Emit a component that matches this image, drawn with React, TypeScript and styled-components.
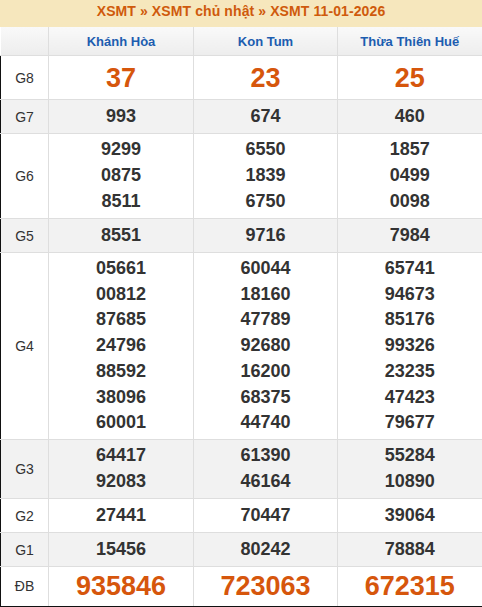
import React from 'react'
import styled, { createGlobalStyle } from 'styled-components'

const GlobalStyle = createGlobalStyle`
  html, body {
    margin: 0;
    padding: 0;
    background: #fff;
  }
  body {
    font-family: 'Liberation Sans', Arial, sans-serif;
  }
`;

const Board = styled.div`
  width: 482px;
  box-sizing: border-box;
`;

const Title = styled.div`
  height: 27px;
  background: #f6e7bd;
  color: #cf5a0c;
  font-weight: bold;
  font-size: 14px;
  line-height: 22px;
  text-align: center;
  letter-spacing: 0.1px;
`;

const Table = styled.table`
  width: 482px;
  border-collapse: collapse;
  table-layout: fixed;
`;

const HeadCell = styled.th`
  height: 28px;
  padding: 0;
  background: linear-gradient(#f9f9f9, #ededed);
  border: 1px solid #dedede;
  border-top: none;
  color: #1c5db0;
  font-size: 13px;
  font-weight: bold;
  text-align: center;
  &:first-child {
    border-left: none;
  }
  &:last-child {
    border-right: 2px solid #111;
  }
`;

const Row = styled.tr<{ $h: number; $shaded?: boolean }>`
  height: ${p => p.$h}px;
  background: ${p => (p.$shaded ? '#f2f2f2' : '#fff')};
  &:last-child td {
    border-bottom: 2px solid #111;
  }
`;

const Label = styled.td`
  padding: 0;
  border: 1px solid #dedede;
  border-left: 1px solid #111;
  color: #333;
  font-size: 14px;
  text-align: center;
`;

const Cell = styled.td`
  padding: 0;
  border: 1px solid #dedede;
  text-align: center;
  vertical-align: middle;
  &:last-child {
    border-right: 2px solid #111;
  }
`;

const Num = styled.div<{ $big?: boolean }>`
  color: ${p => (p.$big ? '#d6560c' : '#333')};
  font-weight: bold;
  font-size: ${p => (p.$big ? 27 : 18)}px;
  line-height: ${p => (p.$big ? 32 : 25.7)}px;
`;

type Prize = { label: string; h: number; big?: boolean; cols: string[][] };

const prizes: Prize[] = [
  { label: 'G8', h: 44, big: true, cols: [['37'], ['23'], ['25']] },
  { label: 'G7', h: 34, cols: [['993'], ['674'], ['460']] },
  {
    label: 'G6',
    h: 85,
    cols: [
      ['9299', '0875', '8511'],
      ['6550', '1839', '6750'],
      ['1857', '0499', '0098'],
    ],
  },
  { label: 'G5', h: 34, cols: [['8551'], ['9716'], ['7984']] },
  {
    label: 'G4',
    h: 187,
    cols: [
      ['05661', '00812', '87685', '24796', '88592', '38096', '60001'],
      ['60044', '18160', '47789', '92680', '16200', '68375', '44740'],
      ['65741', '94673', '85176', '99326', '23235', '47423', '79677'],
    ],
  },
  {
    label: 'G3',
    h: 59,
    cols: [
      ['64417', '92083'],
      ['61390', '46164'],
      ['55284', '10890'],
    ],
  },
  { label: 'G2', h: 34, cols: [['27441'], ['70447'], ['39064']] },
  { label: 'G1', h: 34, cols: [['15456'], ['80242'], ['78884']] },
  { label: 'ĐB', h: 40, big: true, cols: [['935846'], ['723063'], ['672315']] },
];

const provinces = ['Khánh Hòa', 'Kon Tum', 'Thừa Thiên Huế'];

export default function App() {
  return (
    <Board>
      <GlobalStyle />
      <Title>XSMT » XSMT chủ nhật » XSMT 11-01-2026</Title>
      <Table>
        <colgroup>
          <col style={{ width: 48 }} />
          <col style={{ width: 145 }} />
          <col style={{ width: 144 }} />
          <col style={{ width: 145 }} />
        </colgroup>
        <thead>
          <tr>
            <HeadCell />
            {provinces.map(p => (
              <HeadCell key={p}>{p}</HeadCell>
            ))}
          </tr>
        </thead>
        <tbody>
          {prizes.map((prize, i) => (
            <Row key={prize.label} $h={prize.h} $shaded={i % 2 === 1}>
              <Label>{prize.label}</Label>
              {prize.cols.map((nums, j) => (
                <Cell key={j}>
                  {nums.map((n, k) => (
                    <Num key={k} $big={prize.big}>{n}</Num>
                  ))}
                </Cell>
              ))}
            </Row>
          ))}
        </tbody>
      </Table>
    </Board>
  );
}
